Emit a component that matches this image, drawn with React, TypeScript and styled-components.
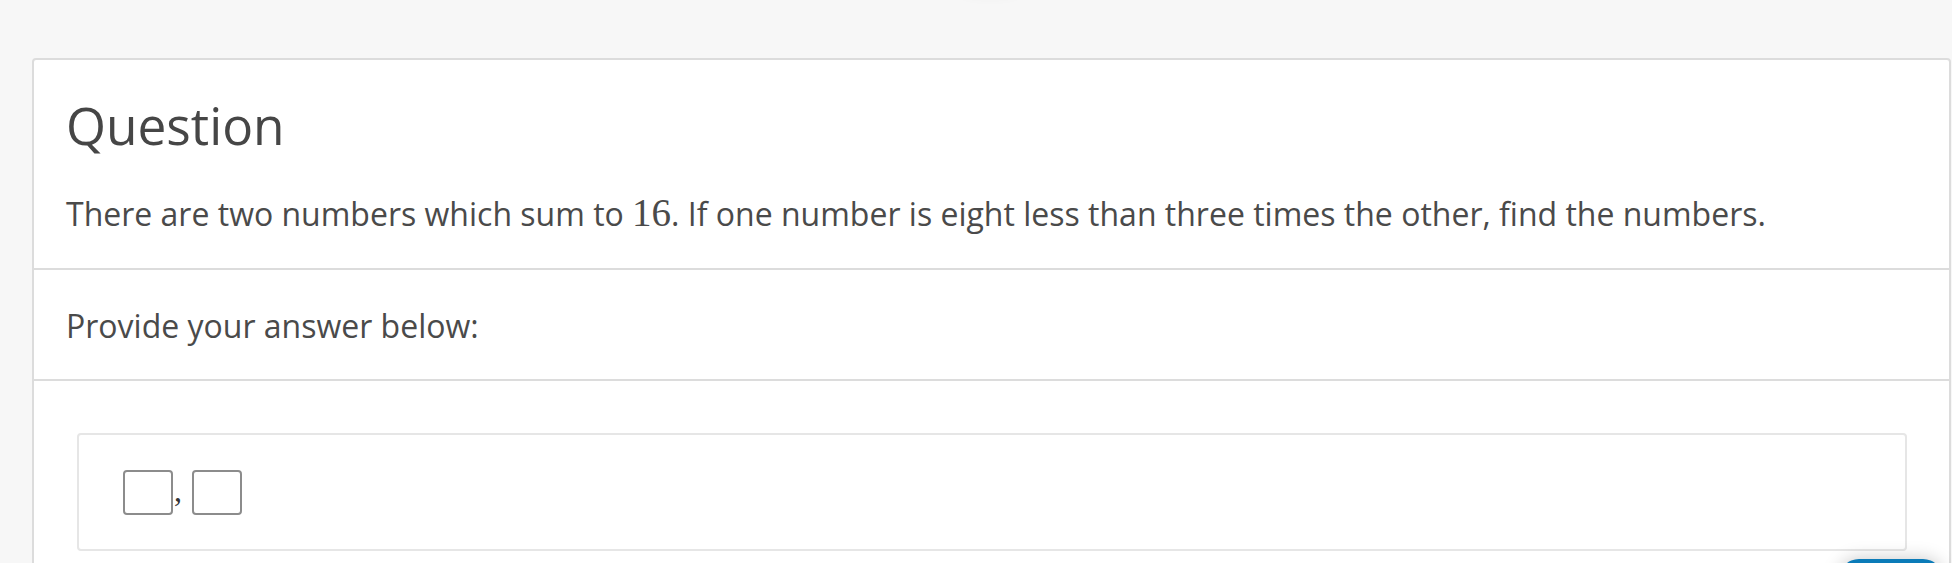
import styled, { createGlobalStyle } from "styled-components";

const GlobalStyle = createGlobalStyle`
  html, body {
    margin: 0;
    padding: 0;
    background-color: #f7f7f7;
  }

  body {
    font-family: "Open Sans", "Noto Sans", sans-serif;
    color: #4a4a4a;
  }
`;

const App = () => {
  return (
    <>
      <GlobalStyle />
      <Page>
        <TopShadow />
        <Card>
          <Section pad="35px 32px 30px">
            <Title>Question</Title>
            <Text>
              There are two numbers which sum to <MathNum>16</MathNum>. If one
              number is eight less than three times the other, find the numbers.
            </Text>
          </Section>

          <Section pad="32px 32px 29px">
            <Text>Provide your answer below:</Text>
          </Section>

          <Section pad="52px 42px 40px 43px" last>
            <AnswerBox>
              <AnswerRow>
                <InputBox />
                <Comma>,</Comma>
                <InputBox />
              </AnswerRow>
            </AnswerBox>
          </Section>
        </Card>
        <FloatingButton />
      </Page>
    </>
  );
};

const Page = styled.div`
  position: relative;
  height: 100vh;
  padding: 58px 1px 0 32px;
  box-sizing: border-box;
  overflow: hidden;
`;

const TopShadow = styled.div`
  position: absolute;
  top: -14px;
  left: 960px;
  width: 60px;
  height: 12px;
  border-radius: 50%;
  box-shadow: 0 2px 8px rgba(0, 0, 0, 0.025);
`;

const Card = styled.div`
  background-color: #ffffff;
  border: 2px solid #dcdcdc;
  border-radius: 4px;
`;

const Section: any = styled.div`
  padding: ${(props: any) => props.pad};
  border-bottom: ${(props: any) => (props.last ? "none" : "2px solid #dcdcdc")};
`;

const Title = styled.h2`
  margin: 0 0 34px;

  font-size: 51.4px;
  font-weight: 400;
  line-height: 60px;
  color: #464646;
`;

const Text = styled.p`
  margin: 0;

  font-size: 32px;
  line-height: 48px;
  color: #4a4a4a;
`;

const MathNum = styled.span`
  font-family: "Liberation Serif", "Times New Roman", serif;
  font-size: 39px;
`;

const AnswerBox = styled.div`
  padding: 35px 44px 34px;

  border: 2px solid #e6e6e6;
  border-radius: 4px;
`;

const AnswerRow = styled.div`
  display: flex;
  align-items: flex-end;
`;

const InputBox = styled.div`
  width: 50px;
  height: 45px;
  box-sizing: border-box;

  border: 2px solid #8c8c8c;
  border-radius: 4px;
`;

const Comma = styled.span`
  margin: 0 10px 9px 1px;

  font-family: "Liberation Serif", "Times New Roman", serif;
  font-size: 32px;
  line-height: 32px;
  color: #333;
`;

const FloatingButton = styled.div`
  position: absolute;
  top: 559px;
  right: 9px;
  width: 104px;
  height: 50px;

  background-color: #0b7bb8;
  border-radius: 20px;
  box-shadow: 0 0 18px rgba(0, 0, 0, 0.22);
`;

export default App;
